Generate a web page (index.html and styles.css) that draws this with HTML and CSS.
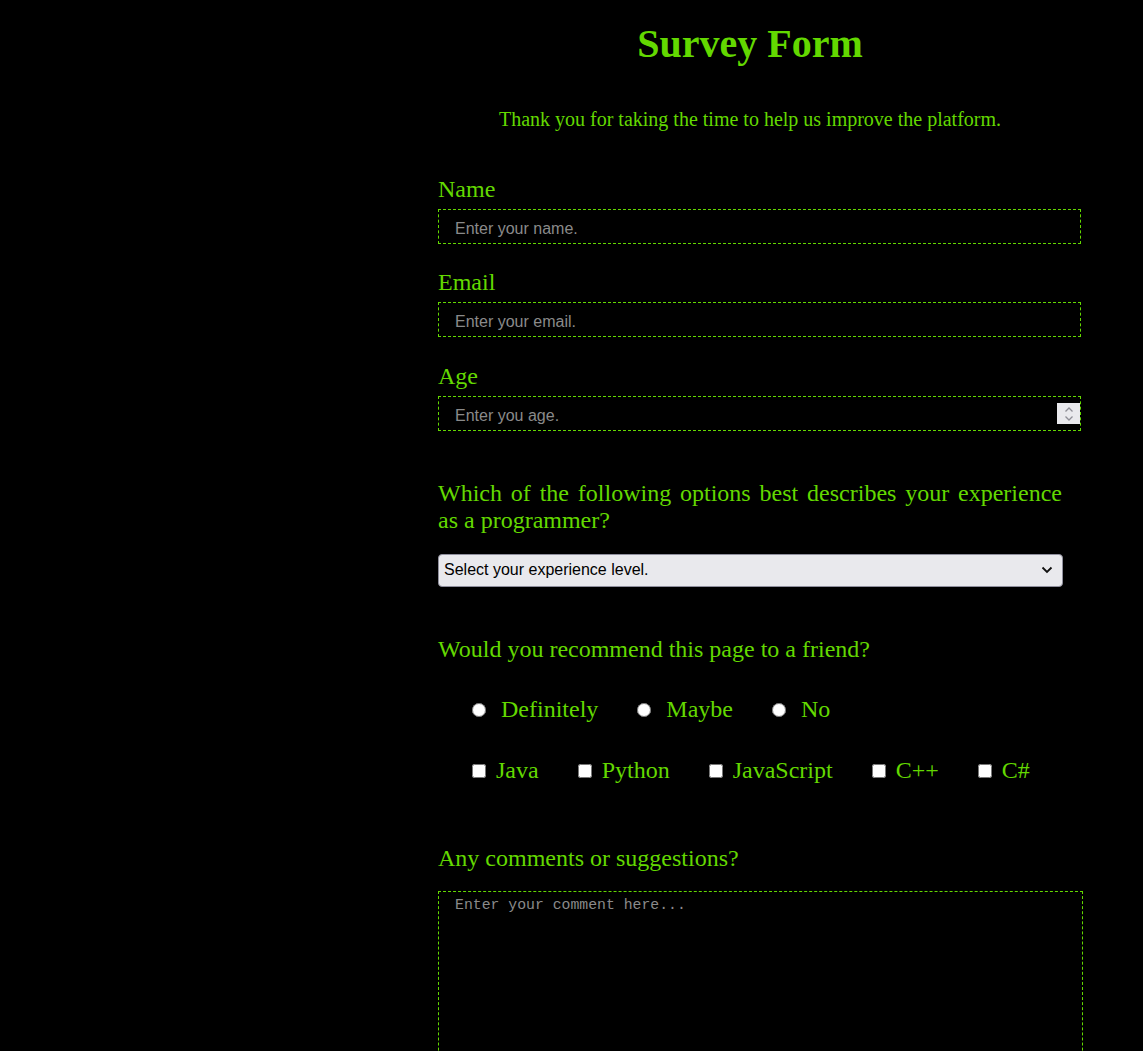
FILE: index.html
```html
<!DOCTYPE html>
<html lang="en">
<head>
<meta charset="utf-8">
<title>Survey Form</title>
<link rel="stylesheet" href="styles.css">
</head>
<body>
<main class="survey">
  <h1 class="title" id="title">Survey Form</h1>
  <p class="description" id="description">Thank you for taking the time to help us improve the platform.</p>
  <form class="form" id="survey-form">
    <div class="group">
      <label class="label" for="name">Name</label>
      <input class="field" id="name" type="text" placeholder="Enter your name.">
    </div>
    <div class="group">
      <label class="label" for="email">Email</label>
      <input class="field" id="email" type="email" placeholder="Enter your email.">
    </div>
    <div class="group group-age">
      <label class="label" for="number">Age</label>
      <div class="number-wrap">
        <input class="field" id="number" type="text" placeholder="Enter you age.">
        <span class="spinner" aria-hidden="true">
          <svg width="10" height="16" viewBox="0 0 10 16"><path d="M1.5 5.5 L5 2 L8.5 5.5" fill="none" stroke="#8e8e96" stroke-width="1.3"/><path d="M1.5 10.5 L5 14 L8.5 10.5" fill="none" stroke="#8e8e96" stroke-width="1.3"/></svg>
        </span>
      </div>
    </div>
    <div class="group question">
      <label class="label justify" for="dropdown">Which of the following options best describes your experience as a programmer?</label>
      <div class="select-wrap">
        <select class="select" id="dropdown">
          <option>Select your experience level.</option>
          <option>Beginner</option>
          <option>Intermediate</option>
          <option>Advanced</option>
        </select>
        <svg class="chevron" width="12" height="8" viewBox="0 0 12 8" aria-hidden="true"><path d="M1.5 1.5 L6 6 L10.5 1.5" fill="none" stroke="#111" stroke-width="1.8"/></svg>
      </div>
    </div>
    <div class="group recommend">
      <p class="label">Would you recommend this page to a friend?</p>
      <div class="options radios">
        <label class="opt"><input type="radio" name="rec" value="definitely">Definitely</label>
        <label class="opt"><input type="radio" name="rec" value="maybe">Maybe</label>
        <label class="opt"><input type="radio" name="rec" value="no">No</label>
      </div>
      <div class="options checks">
        <label class="opt"><input type="checkbox" value="java">Java</label>
        <label class="opt"><input type="checkbox" value="python">Python</label>
        <label class="opt"><input type="checkbox" value="javascript">JavaScript</label>
        <label class="opt"><input type="checkbox" value="cpp">C++</label>
        <label class="opt"><input type="checkbox" value="csharp">C#</label>
      </div>
    </div>
    <div class="group comments">
      <label class="label" for="comments">Any comments or suggestions?</label>
      <textarea class="area" id="comments" placeholder="Enter your comment here..."></textarea>
    </div>
  </form>
</main>
</body>
</html>
```

FILE: styles.css
```css
html, body {
  background: #000;
}
body {
  margin: 8px;
  font-family: "Liberation Serif", "Times New Roman", serif;
  color: #63d800;
}
.survey {
  margin-left: 430px;
  width: 624px;
}
.title {
  font-size: 40px;
  font-weight: bold;
  text-align: center;
  margin: 13px 0 0;
  line-height: 46px;
}
.description {
  font-size: 20px;
  text-align: center;
  margin: 41px 0 0;
  line-height: 23px;
}
.form {
  margin-top: 44px;
}
.group {
  margin-bottom: 24px;
}
.group-age {
  padding-top: 1px;
}
.label {
  display: block;
  font-size: 24px;
  line-height: 28px;
  margin: 0 0 6px;
}
.justify {
  text-align: justify;
  line-height: 27px;
}
.field {
  display: block;
  box-sizing: border-box;
  width: 643px;
  height: 35px;
  margin: 0;
  padding: 4px 16px 0;
  background: #000;
  border: 1px dashed #63d800;
  color: #ddd;
  font-family: "Liberation Sans", Arial, sans-serif;
  font-size: 16px;
  outline: none;
}
.field::placeholder,
.area::placeholder {
  color: #8a8a8a;
}
.number-wrap {
  position: relative;
  width: 643px;
}
.spinner {
  position: absolute;
  right: 1px;
  top: 7px;
  width: 23px;
  height: 21px;
  background: #e9e9ed;
  display: flex;
  align-items: center;
  justify-content: center;
}
.question {
  margin-top: 49px;
}
.question .label {
  margin-bottom: 20px;
}
.select-wrap {
  position: relative;
  width: 625px;
}
.select {
  display: block;
  width: 625px;
  height: 33px;
  box-sizing: border-box;
  appearance: none;
  -webkit-appearance: none;
  margin: 0;
  padding: 0 30px 3px 5px;
  background: #e9e9ed;
  border: 1px solid #8f8f9d;
  border-radius: 4px;
  color: #000;
  font-family: "Liberation Sans", Arial, sans-serif;
  font-size: 16px;
}
.chevron {
  position: absolute;
  right: 10px;
  top: 12px;
  pointer-events: none;
}
.recommend {
  margin-top: 48px;
}
.recommend .label {
  margin: 0;
}
.options {
  display: flex;
  align-items: baseline;
  gap: 39px;
  padding-left: 34px;
  font-size: 24px;
  line-height: 28px;
}
.radios {
  margin-top: 32px;
}
.checks {
  margin-top: 33px;
}
.options input {
  width: 14px;
  height: 14px;
}
.radios input {
  margin: 0 15px 0 0;
}
.checks input {
  margin: 0 10px 0 0;
}
.comments {
  margin-top: 60px;
}
.comments .label {
  margin-bottom: 19px;
}
.area {
  display: block;
  box-sizing: border-box;
  width: 645px;
  height: 200px;
  margin: 0;
  padding: 5px 16px;
  background: #000;
  border: 1px dashed #63d800;
  color: #ddd;
  font-family: "Liberation Mono", "Courier New", monospace;
  font-size: 14.8px;
  resize: vertical;
  outline: none;
}
```
